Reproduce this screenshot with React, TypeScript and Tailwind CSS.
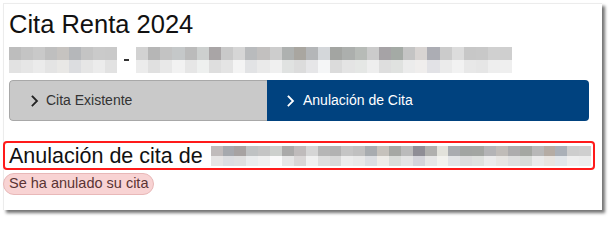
import React from "react";

const top1 = ["#bdbdbd","#c4c4c4","#c9c9c9","#bfbfbf","#c6c3c0","#b5b7ba","#c4c4c4","#cacaca","#c9c9c9"];
const bot1 = ["#e2e2e2","#e6e6e6","#ebebeb","#e4e4e4","#e9e8e6","#dcdde0","#e6e6e6","#ececec","#e2e2e2"];
const top2 = ["#d2d2d2","#b6b6b6","#c3c3c3","#c5c8c9","#bbbbbb","#cdd0cf","#a9a5a6","#c9c9c9","#d6d6d6","#b9bbbd","#c2c0bf","#cdcdcd","#aeb1b0","#a9a6a0","#b4b6b8","#d4d7da","#a3a5a2","#acafad","#b7bbb7","#cbcbcb","#a6a3a6","#a4aaa5","#c4c4c4","#d8d4d2","#acadb4","#cbcbcb","#dcdcdc","#c7c7c7","#c8c8c8","#d0d0d0","#cfcfcf"];
const bot2 = ["#ececec","#e0e0e0","#e8e8e8","#f2f2f2","#e6e6e6","#eef0ef","#dedede","#e4e4e4","#f4f4f4","#e2e3e5","#eaeaea","#f0f0f0","#e0e2e1","#dcdcdc","#e6e6e8","#f5f6f7","#dbdbdb","#e4e4e4","#e5e7e5","#eeeeee","#dedede","#e0e2e0","#ececec","#f0eeed","#e2e2e6","#ebebeb","#f2f2f2","#e8e8e8","#e6e6e6","#eeeeee","#efefef"];

const top3 = ["#c0bbbb","#a6a9ae","#a7a3a2","#bfc2c3","#c5c5c5","#cdd0cd","#aaaaa9","#bfbbbb","#d5d5d5","#b6b6b6","#b2b2b2","#c5c5c5","#c0c0c0","#a8acb0","#c6c2bc","#a6a8a4","#bbbbbb","#8f8e96","#b0b0ae","#e2e2db","#a9acb0","#a2a5a2","#a3a6a2","#b4b4b6","#c0bcb8","#adacad","#a4a7a2","#b8b8b8","#b5aca4","#aab0b8","#cdcdcd","#cfcfcf"];
const bot3 = ["#e6e4e4","#dcdde0","#dfdfdf","#eaeced","#f0f0f0","#fafafa","#e6e6e6","#d9d6d6","#f0f0f0","#dedede","#d8d8d8","#ececec","#e8e8e8","#dcdee2","#eeece8","#dadcd9","#e4e4e4","#d4d4da","#e6e6e6","#f2f2ee","#e2e4e6","#dcdcdc","#dfe1de","#ebebeb","#e7e5e2","#dedede","#d8dbd8","#eaeaea","#e8e4e0","#e2e6ea","#eeeeee","#ececec"];

function Mosaic({ top, bot, cell, h }: { top: string[]; bot: string[]; cell: number; h: number }) {
  return (
    <div className="flex flex-col shrink-0">
      <div className="flex">
        {top.map((c, i) => (
          <div key={i} className="shrink-0" style={{ background: c, width: cell, height: h }} />
        ))}
      </div>
      <div className="flex">
        {bot.map((c, i) => (
          <div key={i} className="shrink-0" style={{ background: c, width: cell, height: h }} />
        ))}
      </div>
    </div>
  );
}

function Chevron({ color }: { color: string }) {
  return (
    <svg width="8" height="12" viewBox="0 0 8 12" className="shrink-0">
      <polyline points="1.5,1.5 6,6 1.5,10.5" fill="none" stroke={color} strokeWidth="1.8" strokeLinecap="square" />
    </svg>
  );
}

export default function App() {
  return (
    <div className="w-[613px] h-[221px] bg-white pl-[3px] pt-[3px]" style={{ fontFamily: '"Liberation Sans", Arial, sans-serif' }}>
      <div className="w-[599px] h-[207px] bg-white border-l border-t border-[#ececec] shadow-[3px_3px_3px_rgba(0,0,0,0.55)] pt-[6px] pl-[5px] pr-[6px]">
        <div className="text-[25.5px] leading-[28px] text-[#111] whitespace-nowrap">Cita Renta 2024</div>
        <div className="mt-[9px] flex items-center h-[26px]">
          <Mosaic top={top1} bot={bot1} cell={12} h={13} />
          <div className="w-[19px] flex justify-center">
            <div className="w-[5px] h-[2px] bg-[#333]" />
          </div>
          <Mosaic top={top2} bot={bot2} cell={12.15} h={13} />
        </div>
        <div className="mt-[7px] mr-[7px] flex h-[41px] rounded-[4px] overflow-hidden">
          <div className="w-[258px] flex items-center gap-[7px] pl-[21px] bg-[#c9c9c9] border border-[#a8a8a8] border-r-0 rounded-l-[4px] text-[14px] text-[#333] whitespace-nowrap">
            <Chevron color="#222" />
            <span>Cita Existente</span>
          </div>
          <div className="flex-1 flex items-center gap-[8px] pl-[20px] bg-[#00427f] text-[14px] text-white whitespace-nowrap">
            <Chevron color="#ffffff" />
            <span>Anulación de Cita</span>
          </div>
        </div>
        <div className="mt-[20px] -ml-[6px] mr-[1px] h-[29px] border-2 border-[#ff1a1a] rounded-[4px] flex items-center pl-[4px] overflow-hidden">
          <span className="text-[21.5px] leading-[24px] text-[#111] whitespace-nowrap shrink-0">Anulación de cita de</span>
          <div className="ml-[8px] shrink-0">
            <Mosaic top={top3} bot={bot3} cell={11.9} h={10} />
          </div>
        </div>
        <div className="mt-[3px] -ml-[6px] inline-flex items-center h-[22px] px-[5px] rounded-full bg-[#f8d3d3] border border-[#e8b8b8] text-[14.5px] text-[#5a3434] whitespace-nowrap">
          Se ha anulado su cita
        </div>
      </div>
    </div>
  );
}
